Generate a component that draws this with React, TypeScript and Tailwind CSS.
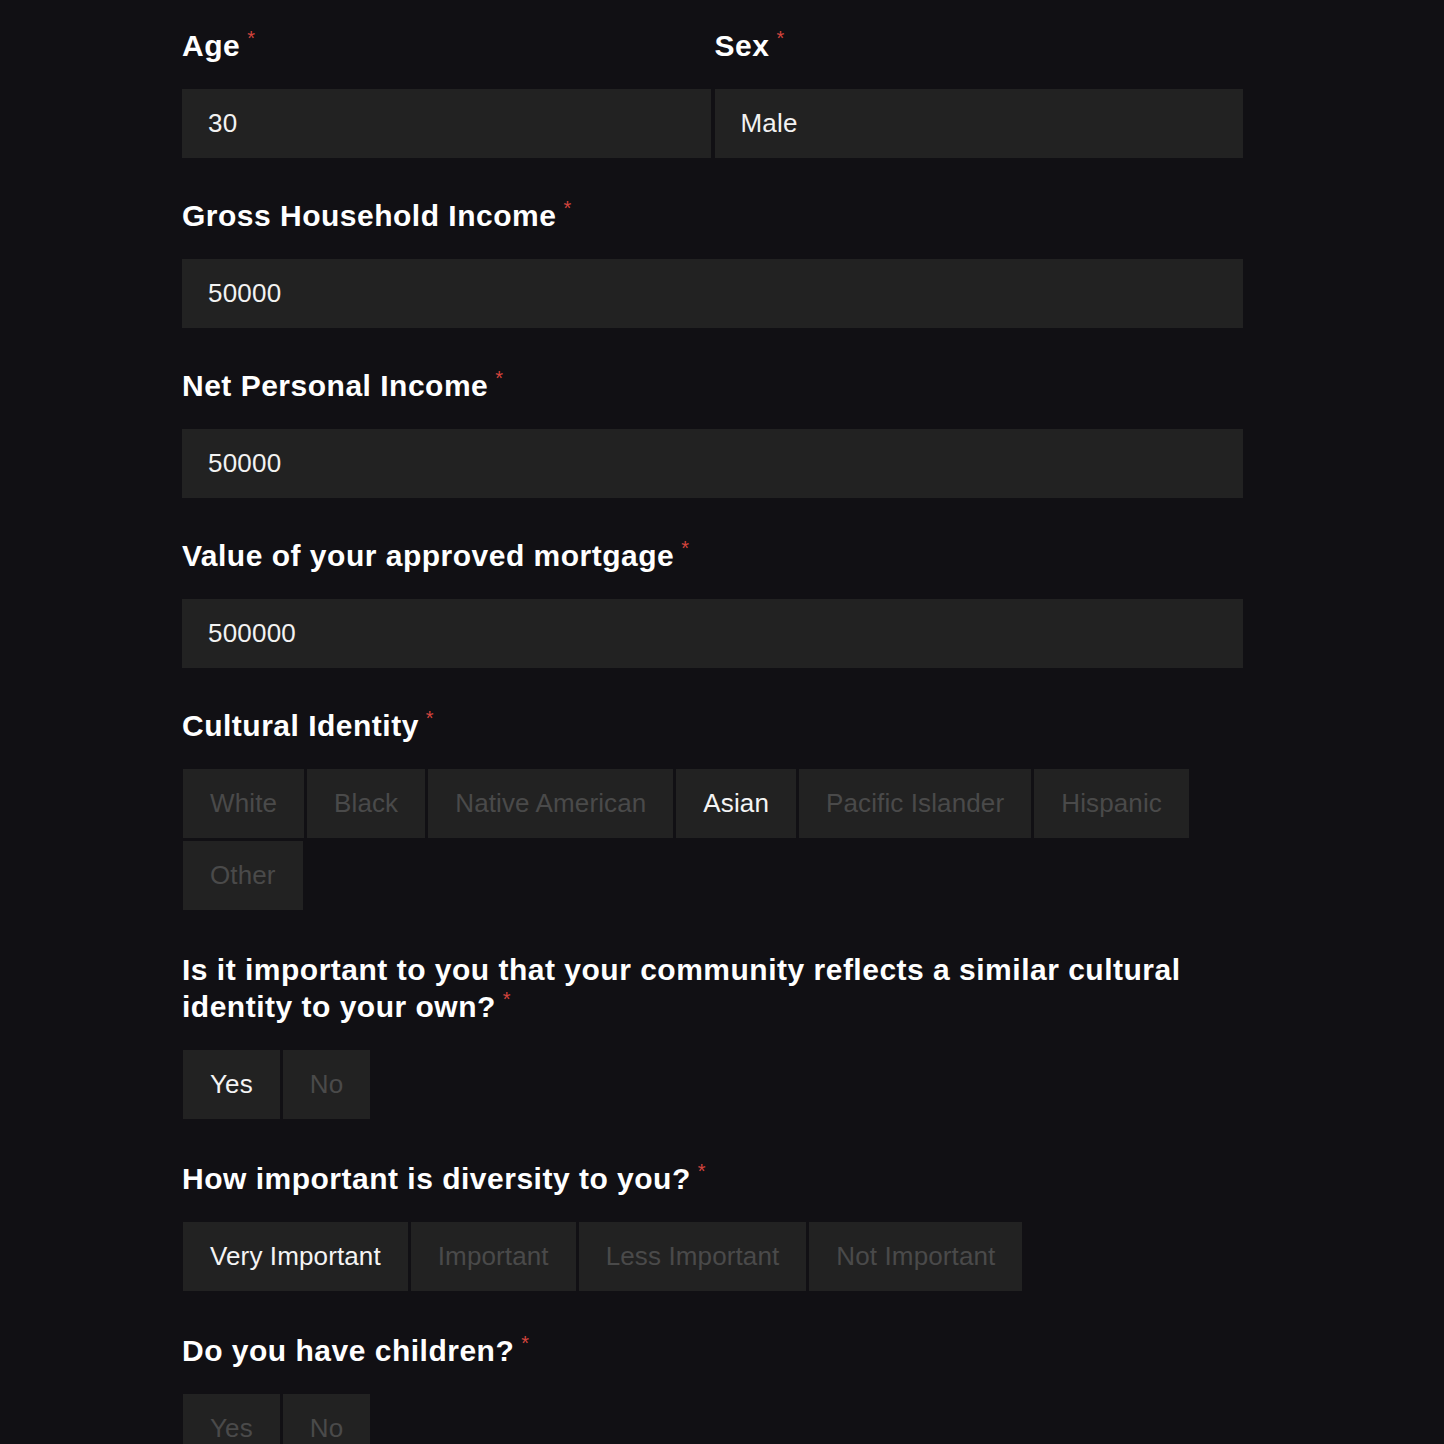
import React, { useState } from 'react';

const font = { fontFamily: '"Liberation Sans", Arial, Helvetica, sans-serif' };

function Label({ children }: { children: React.ReactNode }) {
  return (
    <div className="mb-[25px] text-[30px] leading-[37px] font-bold tracking-[0.5px] text-white">
      {children}
      <span className="relative top-[-11px] ml-[7px] text-[20px] leading-[12px] font-normal text-[#d4443d]">*</span>
    </div>
  );
}

function Field({ value }: { value: string }) {
  return (
    <div className="flex h-[69px] items-center bg-[#222222] px-[26px] text-[26px] tracking-[0.2px] text-[#f2f2f2]">
      {value}
    </div>
  );
}

function Choices({ options, selected }: { options: string[]; selected: string | null }) {
  const [current, setCurrent] = useState(selected);
  return (
    <div className="mb-[41px] flex flex-wrap gap-[3px] pl-px">
      {options.map((opt) => (
        <button
          key={opt}
          onClick={() => setCurrent(opt)}
          className={
            'flex h-[69px] items-center bg-[#222222] px-[27px] text-[26px] tracking-[0.12px] ' +
            (current === opt ? 'text-[#f4f4f4]' : 'text-[#4a4a4a]')
          }
        >
          {opt}
        </button>
      ))}
    </div>
  );
}

export default function App() {
  return (
    <div className="min-h-[1444px] bg-[#111014] pt-[27px]" style={font}>
      <div className="ml-[182px] w-[1061px]">
        {/* Age / Sex */}
        <div className="mb-[39px] grid grid-cols-2 gap-[4px]">
          <div>
            <Label>Age</Label>
            <Field value="30" />
          </div>
          <div>
            <Label>Sex</Label>
            <Field value="Male" />
          </div>
        </div>

        <div className="mb-[39px]">
          <Label>Gross Household Income</Label>
          <Field value="50000" />
        </div>

        <div className="mb-[39px]">
          <Label>Net Personal Income</Label>
          <Field value="50000" />
        </div>

        <div className="mb-[39px]">
          <Label>Value of your approved mortgage</Label>
          <Field value="500000" />
        </div>

        <Label>Cultural Identity</Label>
        <Choices
          options={['White', 'Black', 'Native American', 'Asian', 'Pacific Islander', 'Hispanic', 'Other']}
          selected="Asian"
        />

        <Label>Is it important to you that your community reflects a similar cultural identity to your own?</Label>
        <Choices options={['Yes', 'No']} selected="Yes" />

        <Label>How important is diversity to you?</Label>
        <Choices
          options={['Very Important', 'Important', 'Less Important', 'Not Important']}
          selected="Very Important"
        />

        <Label>Do you have children?</Label>
        <Choices options={['Yes', 'No']} selected={null} />
      </div>
    </div>
  );
}
